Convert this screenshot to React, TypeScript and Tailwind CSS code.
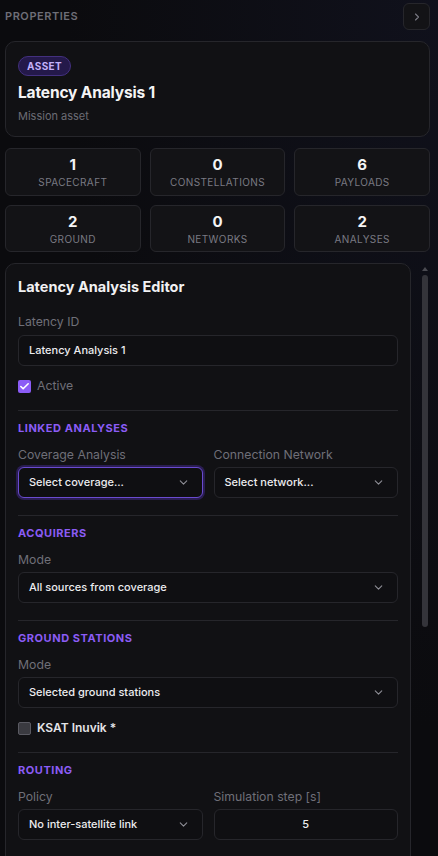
import { ChevronDown, ChevronRight, Check } from 'lucide-react';

const stats = [
  { value: 1, label: 'Spacecraft' },
  { value: 0, label: 'Constellations' },
  { value: 6, label: 'Payloads' },
  { value: 2, label: 'Ground' },
  { value: 0, label: 'Networks' },
  { value: 2, label: 'Analyses' },
];

function SectionTitle({ children }: { children: string }) {
  return <div className="text-[11px] leading-4 font-bold tracking-[0.05em] uppercase text-[#8b5cf6]">{children}</div>;
}

function Label({ children }: { children: string }) {
  return <div className="text-[12.25px] leading-[18px] text-[#6f6f78]">{children}</div>;
}

function Select({ value, focused }: { value: string; focused?: boolean }) {
  return (
    <div
      className={
        focused
          ? 'mt-[3px] flex h-[31px] items-center justify-between rounded-md border border-[#6a4bd0] bg-[#0f0f12] pl-[10px] pr-[12px] ring-2 ring-[#2a1d52]'
          : 'mt-[3px] flex h-[31px] items-center justify-between rounded-md border border-[#26262b] bg-[#0f0f12] pl-[10px] pr-[12px]'
      }
    >
      <span className="text-[11px] font-medium text-[#ececef]">{value}</span>
      <ChevronDown className="h-[13px] w-[13px] text-[#8e8e96]" strokeWidth={2} />
    </div>
  );
}

function Divider() {
  return <div className="border-t border-[#26262b]" />;
}

export default function App() {
  return (
    <div
      className="flex h-screen flex-col overflow-hidden bg-[radial-gradient(ellipse_at_top_right,#10111c_0%,#0b0b0e_60%)] pl-[5px] text-white"
      style={{ fontFamily: 'Inter, "Noto Sans", sans-serif' }}
    >
      <div className="mt-[3px] flex h-[27px] shrink-0 items-center justify-between pr-[8px]">
        <div className="text-[11px] font-semibold tracking-[0.05em] text-[#6e6e77]">PROPERTIES</div>
        <button className="flex h-[27px] w-[27px] items-center justify-center rounded-md border border-[#26262b] bg-[#131316]">
          <ChevronRight className="h-3 w-3 text-[#7a7a84]" strokeWidth={2.25} />
        </button>
      </div>

      <div className="mr-[8px] mt-[11px] flex shrink-0 flex-col items-start rounded-[10px] border border-[#26262b] bg-[#111114] px-[12px] pt-[14px] pb-[12px]">
        <span className="flex h-5 items-center rounded-full border border-[#43307f] bg-[#24194a] px-[8px] text-[10px] font-bold tracking-[0.04em] text-[#c3b1fb]">
          ASSET
        </span>
        <div className="mt-[7px] text-[15.5px] leading-5 font-bold tracking-[-0.01em] text-[#f4f4f5]">Latency Analysis 1</div>
        <div className="mt-[5px] text-[11px] leading-4 text-[#6c6c75]">Mission asset</div>
      </div>

      <div className="mr-[8px] mt-[11px] grid shrink-0 grid-cols-3 gap-[9px]">
        {stats.map((s) => (
          <div key={s.label} className="flex h-[47.5px] flex-col items-center rounded-md border border-[#26262b] bg-[#131316] pt-[6px]">
            <div className="text-[15px] leading-5 font-bold text-[#f4f4f5]">{s.value}</div>
            <div className="text-[10px] leading-[14px] tracking-[0.04em] uppercase text-[#7a7a83]">{s.label}</div>
          </div>
        ))}
      </div>

      <div className="mt-[11px] flex min-h-0 flex-1">
        <div className="min-w-0 flex-1 overflow-hidden">
          <div className="rounded-[10px] border border-[#26262b] bg-[#111114] px-[12px] pt-[13px] pb-[200px]">
            <div className="text-[14.5px] leading-5 font-bold text-[#f1f1f3]">Latency Analysis Editor</div>

            <div className="mt-[16px]">
              <Label>Latency ID</Label>
              <div className="mt-1 flex h-[31px] items-center rounded-md border border-[#26262b] bg-[#0f0f12] px-[10px] text-[11px] font-medium text-[#ececef]">
                Latency Analysis 1
              </div>
            </div>

            <div className="mt-[11px] flex h-[18px] items-center gap-[6px]">
              <span className="flex h-[13px] w-[13px] items-center justify-center rounded-[2px] bg-[#8b5cf6]">
                <Check className="h-[11px] w-[11px] text-white" strokeWidth={3.5} />
              </span>
              <span className="text-[12.25px] text-[#6f6f78]">Active</span>
            </div>

            <div className="mt-[15px]">
              <Divider />
            </div>
            <div className="pt-[9px]">
              <SectionTitle>Linked analyses</SectionTitle>
              <div className="mt-[10px] grid grid-cols-2 gap-x-[11px]">
                <div>
                  <Label>Coverage Analysis</Label>
                  <Select value="Select coverage..." focused />
                </div>
                <div>
                  <Label>Connection Network</Label>
                  <Select value="Select network..." />
                </div>
              </div>
            </div>

            <div className="mt-[17px]">
              <Divider />
            </div>
            <div className="pt-[9px]">
              <SectionTitle>Acquirers</SectionTitle>
              <div className="mt-[10px]">
                <Label>Mode</Label>
                <Select value="All sources from coverage" />
              </div>
            </div>

            <div className="mt-[17px]">
              <Divider />
            </div>
            <div className="pt-[9px]">
              <SectionTitle>Ground stations</SectionTitle>
              <div className="mt-[10px]">
                <Label>Mode</Label>
                <Select value="Selected ground stations" />
              </div>
              <div className="mt-[11px] flex h-[18px] items-center gap-[6px]">
                <span className="h-[13px] w-[13px] rounded-[2px] border border-[#5a5a62] bg-[#3a3a40]" />
                <span className="text-[12px] font-semibold text-[#e4e4e7]">KSAT Inuvik *</span>
              </div>
            </div>

            <div className="mt-[15px]">
              <Divider />
            </div>
            <div className="pt-[9px]">
              <SectionTitle>Routing</SectionTitle>
              <div className="mt-[10px] grid grid-cols-2 gap-x-[11px]">
                <div>
                  <Label>Policy</Label>
                  <Select value="No inter-satellite link" />
                </div>
                <div>
                  <Label>Simulation step [s]</Label>
                  <div className="mt-[3px] flex h-[31px] items-center justify-center rounded-md border border-[#26262b] bg-[#0f0f12] text-[11px] font-medium text-[#ececef]">
                    5
                  </div>
                </div>
              </div>
            </div>
          </div>
        </div>

        <div className="flex w-[27px] shrink-0 flex-col items-center">
          <div className="mt-[4px] h-0 w-0 border-x-[3px] border-b-[4px] border-x-transparent border-b-[#4a4a51]" />
          <div className="mt-[4px] h-[352px] w-[6px] rounded-full bg-[#34343a]" />
        </div>
      </div>
    </div>
  );
}
